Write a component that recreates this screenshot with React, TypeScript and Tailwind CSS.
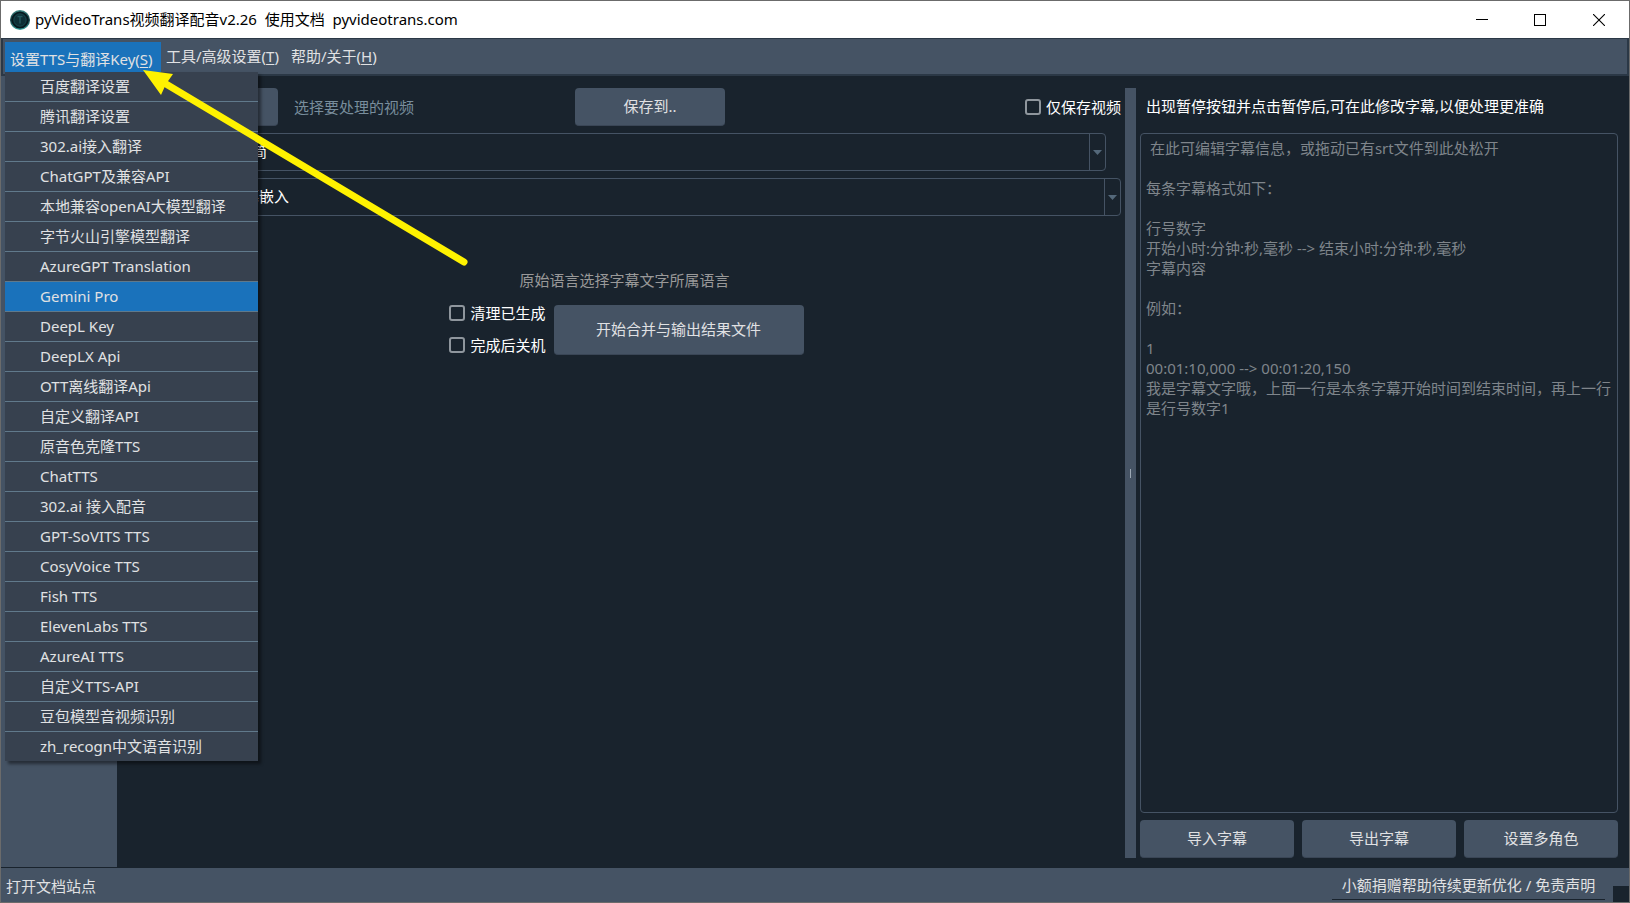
import React from 'react';

const menuItems = [
  '百度翻译设置',
  '腾讯翻译设置',
  '302.ai接入翻译',
  'ChatGPT及兼容API',
  '本地兼容openAI大模型翻译',
  '字节火山引擎模型翻译',
  'AzureGPT Translation',
  'Gemini Pro',
  'DeepL Key',
  'DeepLX Api',
  'OTT离线翻译Api',
  '自定义翻译API',
  '原音色克隆TTS',
  'ChatTTS',
  '302.ai 接入配音',
  'GPT-SoVITS TTS',
  'CosyVoice TTS',
  'Fish TTS',
  'ElevenLabs TTS',
  'AzureAI TTS',
  '自定义TTS-API',
  '豆包模型音视频识别',
  'zh_recogn中文语音识别',
];

const activeItem = 'Gemini Pro';

const subtitleHint = ` 在此可编辑字幕信息，或拖动已有srt文件到此处松开

每条字幕格式如下：

行号数字
开始小时:分钟:秒,毫秒 --> 结束小时:分钟:秒,毫秒
字幕内容

例如：

1
00:01:10,000 --> 00:01:20,150
我是字幕文字哦，上面一行是本条字幕开始时间到结束时间，再上一行是行号数字1`;

const buttonClass =
  'rounded border-b border-[#3a4656] bg-[#455364] text-[#e0e1e3] hover:bg-[#54687a]';

const TitleBar = () => (
  <header className="flex h-[37px] items-center bg-white text-black">
    <svg className="ml-[9px] h-5 w-5" viewBox="0 0 20 20">
      <defs>
        <linearGradient id="ring" x1="0" y1="0" x2="0" y2="1">
          <stop offset="0" stopColor="#3d8583" />
          <stop offset="0.5" stopColor="#123d42" />
          <stop offset="1" stopColor="#38a3a0" />
        </linearGradient>
      </defs>
      <circle cx="10" cy="10" r="10" fill="url(#ring)" />
      <circle cx="10" cy="10" r="8.6" fill="#06191f" />
      <circle cx="10" cy="10" r="6.2" fill="#0d2f36" stroke="#1b4f55" strokeWidth="0.8" />
      <path d="M7.500 6.500h5M10 6.500v7" stroke="#24595e" strokeWidth="1.4" />
    </svg>
    <h1 className="ml-[5px] flex-1 whitespace-pre">pyVideoTrans视频翻译配音v2.26  使用文档  pyvideotrans.com</h1>
    <div className="flex h-full">
      <button aria-label="最小化" className="grid w-[58px] place-items-center hover:bg-gray-200">
        <svg width="12" height="12" viewBox="0 0 12 12" shapeRendering="crispEdges">
          <path d="M0 5.5h12" stroke="#000" />
        </svg>
      </button>
      <button aria-label="最大化" className="grid w-[58px] place-items-center hover:bg-gray-200">
        <svg width="12" height="12" viewBox="0 0 12 12" shapeRendering="crispEdges">
          <path d="M.5 .5h11v11H.5z" fill="none" stroke="#000" />
        </svg>
      </button>
      <button aria-label="关闭" className="grid w-[60px] place-items-center hover:bg-red-500">
        <svg width="12" height="12" viewBox="0 0 12 12">
          <path d="M0 0l12 12M12 0L0 12" stroke="#000" strokeWidth="1.1" />
        </svg>
      </button>
    </div>
  </header>
);

const MenuBar = () => (
  <nav className="relative z-10 flex h-[38px] border-x-2 border-t border-b-2 border-[#2b3846] bg-[#455364] pt-[3px] pl-0.5">
    <div className="relative">
      <button className="block h-[30px] w-[156px] bg-[#1a72bb] pt-1 pl-[5px] text-left leading-5 whitespace-nowrap">
        设置TTS与翻译Key(<u className="underline-offset-2">S</u>)
      </button>
      <ul className="absolute top-[30px] left-0 w-[253px] bg-[#37414f] shadow-[3px_3px_3px_rgba(0,0,0,0.45)]">
        {menuItems.map((item) => (
          <li key={item} className="border-b border-[#60798b] last:border-b-0">
            <button
              className={`block h-[29px] w-full pb-0.5 pl-[35px] text-left leading-[26px] hover:bg-[#1a72bb] ${
                item === activeItem ? 'bg-[#1a72bb]' : ''
              }`}
            >
              {item}
            </button>
          </li>
        ))}
      </ul>
    </div>
    <button className="ml-[5px] h-[30px] pb-0.5 leading-5">
      工具/高级设置(<u className="underline-offset-2">T</u>)
    </button>
    <button className="ml-3 h-[30px] pb-0.5 leading-5">
      帮助/关于(<u className="underline-offset-2">H</u>)
    </button>
  </nav>
);

const CheckBox = ({ label }: { label: string }) => (
  <label className="flex h-5 items-center gap-[5px] whitespace-nowrap text-white">
    <input
      type="checkbox"
      className="h-4 w-4 appearance-none rounded-[3px] border-2 border-[#8f969d] bg-[#19232d] checked:bg-[#1a72bb]"
    />
    {label}
  </label>
);

const ComboBox = ({ label, value }: { label: string; value: string }) => (
  <div className="flex h-[38px] flex-1 rounded border border-[#455364]">
    <select
      aria-label={label}
      className="flex-1 appearance-none bg-transparent pb-0.5 pl-1.5 text-white outline-none"
    >
      <option>{value}</option>
    </select>
    <span className="grid w-4 place-items-center border-l border-[#455364]">
      <svg width="9" height="5" viewBox="0 0 9 5">
        <path d="M0 0h9L4.5 5z" fill="#54687a" />
      </svg>
    </span>
  </div>
);

const MergePanel = () => (
  <main className="flex min-w-0 flex-1 flex-col gap-[7px] pr-1 pl-[11px]">
    <div className="flex h-[38px] items-center">
      <button aria-label="选择视频" className={`h-full w-[150px] ${buttonClass}`} />
      <span className="ml-4 w-[281px] text-[#788d9c]">选择要处理的视频</span>
      <button className={`h-full w-[150px] ${buttonClass}`}>保存到..</button>
      <div className="ml-auto">
        <CheckBox label="仅保存视频" />
      </div>
    </div>
    <div className="flex pr-[15px] pl-[87px]">
      <ComboBox label="原始语言" value="中文简" />
    </div>
    <div className="flex pl-[79px]">
      <ComboBox label="嵌入字幕" value="硬字幕嵌入" />
    </div>
    <p className="mt-[47px] text-center leading-5 text-[#999999]">原始语言选择字幕文字所属语言</p>
    <div className="mt-1.5 flex items-end justify-center gap-2 pl-1">
      <div className="flex flex-col gap-3">
        <CheckBox label="清理已生成" />
        <CheckBox label="完成后关机" />
      </div>
      <button className={`h-[50px] w-[250px] ${buttonClass}`}>开始合并与输出结果文件</button>
    </div>
  </main>
);

const SubtitlePanel = () => (
  <section className="flex w-[493px] shrink-0 flex-col gap-[7px] pr-[11px] pl-1">
    <label htmlFor="subtitle" className="flex h-[38px] items-center pb-0.5 pl-1.5 whitespace-nowrap text-white">
      出现暂停按钮并点击暂停后,可在此修改字幕,以便处理更准确
    </label>
    <textarea
      id="subtitle"
      placeholder={subtitleHint}
      className="flex-1 resize-none rounded border border-[#455364] bg-transparent py-1 pr-1 pl-[5px] leading-5 outline-none placeholder:text-[#7f858b]"
    />
    <div className="grid h-[38px] grid-cols-3 gap-2">
      <button className={buttonClass}>导入字幕</button>
      <button className={buttonClass}>导出字幕</button>
      <button className={buttonClass}>设置多角色</button>
    </div>
  </section>
);

const Arrow = () => (
  <svg
    className="pointer-events-none absolute top-0 left-0 z-20"
    width="480"
    height="280"
    viewBox="0 0 480 280"
  >
    <path d="M160 80L463 261" stroke="#fff200" strokeWidth="7" strokeLinecap="round" />
    <path d="M142 69L172 73L165 83L160 94Z" fill="#fff200" />
  </svg>
);

const App = () => {
  return (
    <div className="relative flex min-h-screen flex-col border border-[#6b6b6b] bg-[#19232d] font-['Noto_Sans','Noto_Sans_CJK_SC',sans-serif] text-[15px] text-[#e0e1e3]">
      <TitleBar />
      <MenuBar />
      <div className="flex flex-1">
        <aside className="mb-px w-[116px] shrink-0 bg-[#455364]" />
        <div className="flex min-w-0 flex-1 pt-3 pb-2.5">
          <MergePanel />
          <div className="grid w-[11px] shrink-0 place-items-center bg-[#455364]">
            <span className="h-[9px] w-px bg-[#9da9b5]" />
          </div>
          <SubtitlePanel />
        </div>
      </div>
      <footer className="flex h-[34px] items-center bg-[#455364] pl-[5px]">
        <span className="flex-1 pt-0.5">打开文档站点</span>
        <button className="mr-2 h-[30px] w-[273px] border-b border-[#19232d] pt-0.5 text-center">
          小额捐赠帮助待续更新优化 / 免责声明
        </button>
        <span className="h-4 w-4 self-end bg-[#19232d]" />
      </footer>
      <Arrow />
    </div>
  );
};

export default App;
